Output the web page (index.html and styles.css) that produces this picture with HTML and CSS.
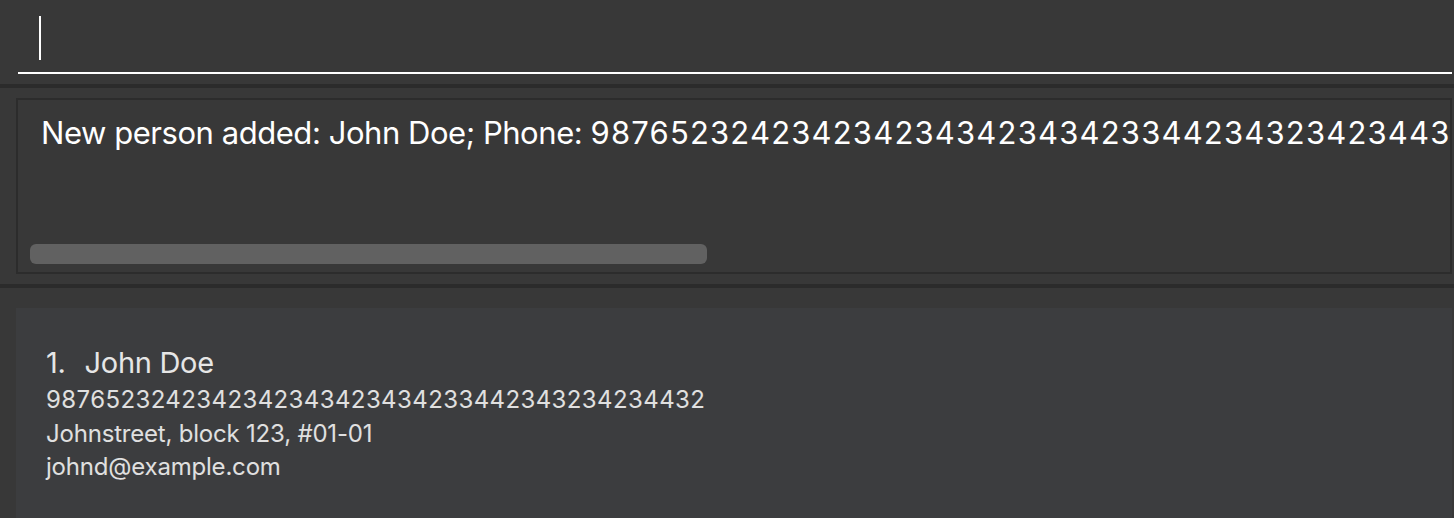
FILE: index.html
```html
<!DOCTYPE html>
<html>
<head>
<meta charset="utf-8">
<link rel="stylesheet" href="styles.css">
</head>
<body>
<div class="app">
  <section class="command">
    <div class="command-field"><span class="caret"></span></div>
  </section>
  <div class="divider"></div>
  <section class="result">
    <div class="result-box">
      <div class="result-text">New person added: John Doe; Phone: <span class="digits">987652324234234234342343423344234323423443</span></div>
      <div class="scrollbar"><div class="thumb"></div></div>
    </div>
  </section>
  <div class="divider"></div>
  <section class="list">
    <div class="card">
      <div class="name-row"><span class="index">1.</span><span class="name">John Doe</span></div>
      <div class="detail phone">9876523242342342343423434233442343234234432</div>
      <div class="detail">Johnstreet, block 123, #01-01</div>
      <div class="detail">johnd@example.com</div>
    </div>
  </section>
</div>
</body>
</html>
```
FILE: styles.css
```css
html, body {
  margin: 0;
  padding: 0;
  background: #383838;
  font-family: Inter, "Noto Sans", sans-serif;
  overflow: hidden;
}
.app {
  width: 1454px;
  height: 518px;
  display: flex;
  flex-direction: column;
  background: #383838;
}
.command {
  height: 84px;
  padding: 0 2px 0 18px;
  box-sizing: border-box;
}
.command-field {
  height: 74px;
  box-sizing: border-box;
  border-bottom: 2px solid #ffffff;
  padding: 16px 0 0 21px;
}
.caret {
  display: block;
  width: 2px;
  height: 44px;
  background: #ffffff;
}
.divider {
  height: 4px;
  background: #2b2b2b;
  flex: none;
}
.result {
  height: 196px;
  box-sizing: border-box;
  padding: 10px 2px 10px 16px;
}
.result-box {
  height: 176px;
  box-sizing: border-box;
  border: 2px solid #2c2c2c;
  display: flex;
  flex-direction: column;
  overflow: hidden;
}
.result-text {
  color: #ffffff;
  font-size: 31px;
  line-height: 40px;
  white-space: nowrap;
  padding: 13px 0 0 23px;
  letter-spacing: -0.45px;
}
.result-text .digits {
  letter-spacing: 1.18px;
}
.scrollbar {
  margin-top: auto;
  padding: 0 0 8px 12px;
}
.thumb {
  width: 677px;
  height: 20px;
  border-radius: 6px;
  background: #616161;
}
.list {
  flex: 1;
  padding: 20px 2px 0 16px;
  display: flex;
  flex-direction: column;
}
.card {
  flex: 1;
  background: #3c3d3f;
  padding: 34px 0 0 30px;
}
.name-row {
  display: flex;
  gap: 19px;
  color: #e6e6e6;
  font-size: 29px;
  line-height: 41px;
  letter-spacing: -0.3px;
}
.detail {
  color: #e0e0e0;
  font-size: 24px;
  line-height: 33.5px;
  letter-spacing: -0.2px;
}
.detail.phone {
  letter-spacing: 0.4px;
}
```
